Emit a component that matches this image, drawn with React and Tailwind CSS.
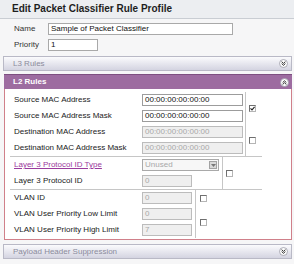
import React from 'react';

// ─── Small drawings ──────────────────────────────────────────────────────────

function ToggleIcon({ up }) {
    return (
        <svg width="9" height="9" viewBox="0 0 9 9">
            <circle cx="4.5" cy="4.5" r="4" fill="#fbfbfb" stroke="#9a9aa6" strokeWidth="0.8" />
            {up ? (
                <path d="M2.6 4.6 L4.5 2.8 L6.4 4.6 M2.6 6.5 L4.5 4.7 L6.4 6.5" fill="none" stroke="#333" strokeWidth="1" />
            ) : (
                <path d="M2.6 2.6 L4.5 4.4 L6.4 2.6 M2.6 4.5 L4.5 6.3 L6.4 4.5" fill="none" stroke="#333" strokeWidth="1" />
            )}
        </svg>
    );
}

function Check({ checked }) {
    return (
        <div className="w-[7px] h-[7px] border border-[#6f6f6f] border-r-[#b5b5b5] border-b-[#b5b5b5] bg-white flex items-center justify-center">
            {checked && (
                <svg width="5" height="5" viewBox="0 0 5 5">
                    <path d="M0.5 2.4 L2 3.9 L4.6 0.8" fill="none" stroke="#222" strokeWidth="1.1" />
                </svg>
            )}
        </div>
    );
}

function Input({ value, width, disabled }) {
    return (
        <div
            className={`h-[12px] ${width} border flex items-center px-[2px] text-[8px] leading-none ${
                disabled ? 'bg-[#efefef] border-[#bcbcbc] text-[#a8a8a8]' : 'bg-white border-[#9c9c9c] text-[#111]'
            }`}
        >
            {value}
        </div>
    );
}

function Row({ label, children, link }) {
    return (
        <div className="h-[16px] flex items-center">
            <div className="w-[132px] pl-[4px]">
                {link ? (
                    <span className="text-[#9b3b9d] underline">{label}</span>
                ) : (
                    <span className="text-[#222]">{label}</span>
                )}
            </div>
            {children}
        </div>
    );
}

function SectionBar({ label }) {
    return (
        <div className="ml-[3px] w-[289px] h-[15px] border border-[#b9b9c6] bg-gradient-to-b from-[#fbfbfd] to-[#d4d4e1] flex items-center justify-between pl-[9px] pr-[3px]">
            <span className="text-[#8b8b9c]">{label}</span>
            <ToggleIcon />
        </div>
    );
}

// ─── Page ────────────────────────────────────────────────────────────────────

export default function App() {
    return (
        <div className="w-[294px] h-[264px] overflow-hidden bg-[#f6f6f7] text-[8px] leading-none font-['Liberation_Sans',Arial,sans-serif]">
            {/* Title */}
            <div className="h-[19px] bg-[#eceef1] border-b border-[#c9cdd3] flex items-center pl-[12px] text-[10px] font-bold text-[#1e1e1e]">
                Edit Packet Classifier Rule Profile
            </div>

            {/* Name / priority */}
            <div className="pt-[4px] flex flex-col gap-[4px]">
                <div className="flex items-center h-[12px]">
                    <span className="w-[48px] pl-[14px] text-[#333]">Name</span>
                    <div className="h-[12px] w-[185px] bg-white border border-[#a9a9a9] flex items-center px-[2px] text-[#111]">
                        Sample of Packet Classifier
                    </div>
                </div>
                <div className="flex items-center h-[12px]">
                    <span className="w-[48px] pl-[14px] text-[#333]">Priority</span>
                    <div className="h-[12px] w-[50px] bg-white border border-[#a9a9a9] flex items-center px-[2px] text-[#111]">
                        1
                    </div>
                </div>
            </div>

            <div className="mt-[5px]">
                <SectionBar label="L3 Rules" />
            </div>

            {/* L2 rules */}
            <div className="mt-[3px] ml-[4px] w-[288px]">
                <div className="h-[15px] bg-[#9d6ca0] border-t border-[#7d4f80] flex items-center justify-between pl-[9px] pr-[3px]">
                    <span className="text-white font-bold">L2 Rules</span>
                    <ToggleIcon up />
                </div>
                <div className="h-[151px] bg-white border-x border-b border-[#d0808a] pt-[3px] pl-[5px]">
                    {/* MAC */}
                    <div className="w-[252px] flex border-b border-[#c6c6c6]">
                        <div className="w-[236px] border-r border-[#c6c6c6]">
                            <Row label="Source MAC Address">
                                <Input value="00:00:00:00:00:00" width="w-[101px]" />
                            </Row>
                            <Row label="Source MAC Address Mask">
                                <Input value="00:00:00:00:00:00" width="w-[101px]" />
                            </Row>
                            <Row label="Destination MAC Address">
                                <Input value="00:00:00:00:00:00" width="w-[101px]" disabled />
                            </Row>
                            <Row label="Destination MAC Address Mask">
                                <Input value="00:00:00:00:00:00" width="w-[101px]" disabled />
                            </Row>
                        </div>
                        <div className="flex-1 flex flex-col pl-[3px]">
                            <div className="h-[32px] flex items-center"><Check checked /></div>
                            <div className="h-[32px] flex items-center"><Check /></div>
                        </div>
                    </div>

                    {/* Layer 3 protocol */}
                    <div className="w-[252px] flex border-b border-[#c6c6c6]">
                        <div className="w-[213px] border-r border-[#c6c6c6]">
                            <Row label="Layer 3 Protocol ID Type" link>
                                <div className="h-[12px] w-[77px] bg-[#f7f7f7] border border-[#a9a9a9] flex items-center justify-between pl-[2px] pr-[1px] text-[#a8a8a8]">
                                    Unused
                                    <div className="w-[8px] h-[8px] bg-[#d9d9d9] border border-[#a2a2a2] flex items-center justify-center">
                                        <svg width="5" height="3" viewBox="0 0 5 3">
                                            <path d="M0 0 L5 0 L2.5 3 Z" fill="#777" />
                                        </svg>
                                    </div>
                                </div>
                            </Row>
                            <Row label="Layer 3 Protocol ID">
                                <Input value="0" width="w-[50px]" disabled />
                            </Row>
                        </div>
                        <div className="flex-1 flex items-center pl-[3px]">
                            <Check />
                        </div>
                    </div>

                    {/* VLAN */}
                    <div className="w-[252px] flex">
                        <div className="w-[186px] border-r border-[#c6c6c6]">
                            <Row label="VLAN ID">
                                <Input value="0" width="w-[50px]" disabled />
                            </Row>
                            <Row label="VLAN User Priority Low Limit">
                                <Input value="0" width="w-[50px]" disabled />
                            </Row>
                            <Row label="VLAN User Priority High Limit">
                                <Input value="7" width="w-[50px]" disabled />
                            </Row>
                        </div>
                        <div className="flex-1 flex flex-col pl-[4px]">
                            <div className="h-[16px] flex items-center"><Check /></div>
                            <div className="h-[32px] flex items-center"><Check /></div>
                        </div>
                    </div>
                </div>
            </div>

            <div className="mt-[4px]">
                <SectionBar label="Payload Header Suppression" />
            </div>
        </div>
    );
}
